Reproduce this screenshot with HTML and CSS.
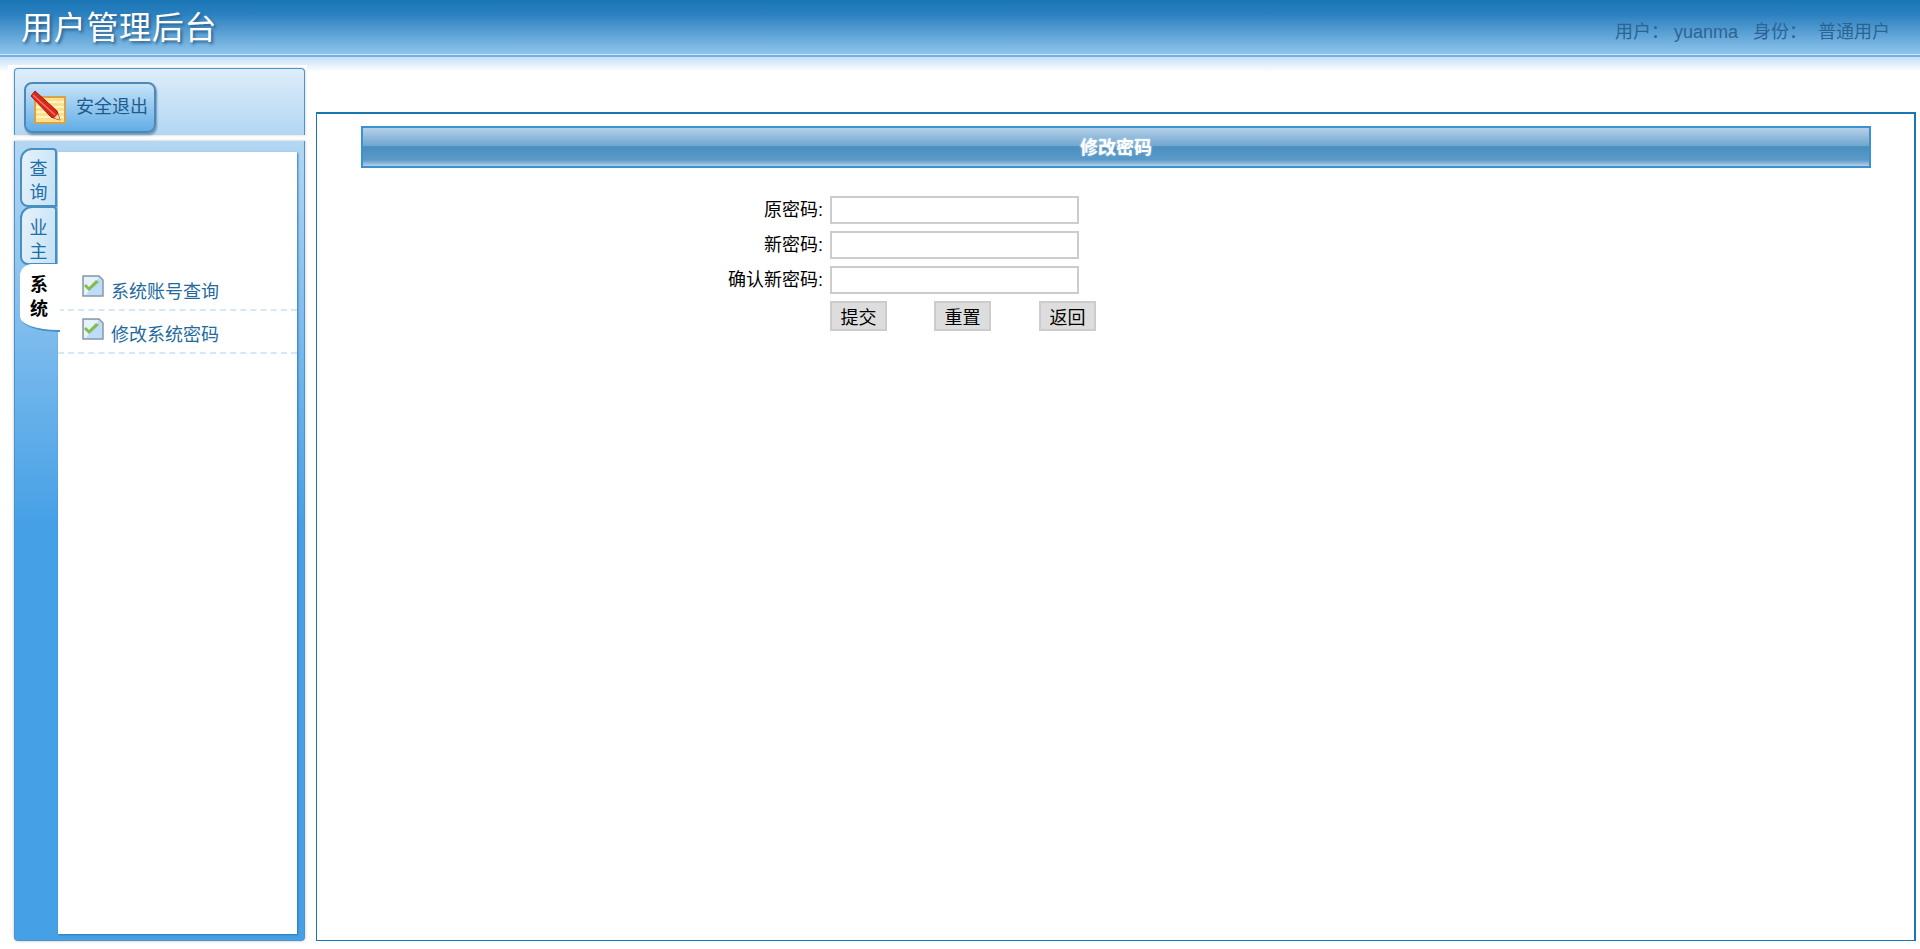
FILE: index.html
```html
<!DOCTYPE html>
<html lang="zh-CN">
<head>
    <meta charset="UTF-8">
    <meta name="viewport" content="width=device-width, initial-scale=1.0">
    <title>用户管理后台</title>
    <link rel="stylesheet" href="styles.css">
</head>
<body>
    <header class="top">
        <h1 class="logo">用户管理后台</h1>
        <div class="user-info">
            <span>用户： yuanma</span>
            <span>身份：</span>
            <span class="user-role">普通用户</span>
        </div>
    </header>

    <div class="page">
        <aside class="side">
            <div class="side-head">
                <a class="logout" href="#">
                    <svg class="logout-icon" width="38" height="36" viewBox="0 0 38 36">
                        <rect x="5" y="7" width="30" height="26" fill="#ffe08a" stroke="#d9a24a" stroke-width="2"/>
                        <path d="M6 12h28M6 17h28M6 22h28M6 27h28" stroke="#fff4c4" stroke-width="2"/>
                        <path d="M1 6 5 1 27 21 30 30 21 27Z" fill="#d8281c" stroke="#a5160f" stroke-width="1"/>
                        <path d="M3 5 25 25" stroke="#f2746a" stroke-width="1.5"/>
                        <path d="M24 28 28 24 30 30Z" fill="#f4d9a8"/>
                    </svg>
                    <span>安全退出</span>
                </a>
            </div>
            <div class="side-body">
                <div class="tabs">
                    <a class="tab" href="#">查<br>询</a>
                    <a class="tab" href="#">业<br>主</a>
                    <a class="tab tab-on" href="#">系<br>统</a>
                </div>
                <ul class="menu">
                    <li class="menu-item">
                        <svg class="doc-icon" width="22" height="22" viewBox="0 0 22 22">
                            <path d="M1 1H17L21 5V21H1Z" fill="#bcdcfa" stroke="#8b98a8" stroke-width="1.5"/>
                            <path d="M2 2H16V4L4 20H2Z" fill="#e6f1fb"/>
                            <path d="M2 11 4 9 7 12 14 5 17 7 7 16Z" fill="#83bc4f"/>
                        </svg>
                        <a href="#">系统账号查询</a>
                    </li>
                    <li class="menu-item">
                        <svg class="doc-icon" width="22" height="22" viewBox="0 0 22 22">
                            <path d="M1 1H17L21 5V21H1Z" fill="#bcdcfa" stroke="#8b98a8" stroke-width="1.5"/>
                            <path d="M2 2H16V4L4 20H2Z" fill="#e6f1fb"/>
                            <path d="M2 11 4 9 7 12 14 5 17 7 7 16Z" fill="#83bc4f"/>
                        </svg>
                        <a href="#">修改系统密码</a>
                    </li>
                </ul>
            </div>
        </aside>

        <main class="main">
            <div class="title-bar">修改密码</div>
            <form class="pwd-form">
                <label for="oldPwd">原密码:</label>
                <input id="oldPwd" type="password">
                <label for="newPwd">新密码:</label>
                <input id="newPwd" type="password">
                <label for="newPwd2">确认新密码:</label>
                <input id="newPwd2" type="password">
                <div class="form-btns">
                    <button type="button">提交</button>
                    <button type="reset">重置</button>
                    <button class="btn-back" type="button">返回</button>
                </div>
            </form>
        </main>
    </div>
</body>
</html>
```

FILE: styles.css
```css
* {
    box-sizing: border-box;
}
html, body {
    height: 100%;
}
body {
    margin: 0;
    display: flex;
    flex-direction: column;
    overflow: hidden;
    background: #fff;
    font-family: "Liberation Sans", "Noto Sans CJK SC", sans-serif;
    font-size: 18px;
}
a {
    text-decoration: none;
}

/* header */
.top {
    height: 57px;
    flex: none;
    display: flex;
    justify-content: space-between;
    padding: 0 30px 0 21px;
    background: linear-gradient(#1a75b5 0, #2a80bf 14px, #8ec4ec 54px, #cfe6f8 54px, #cfe6f8 55px, #74b2de 55px);
}
.logo {
    margin: 0;
    padding-top: 4px;
    font-size: 32px;
    line-height: 48px;
    font-weight: normal;
    letter-spacing: 0.7px;
    color: #fff;
    text-shadow: 2px 2px 3px #2a5f8a;
}
.user-info {
    display: flex;
    gap: 15px;
    padding-top: 20px;
    line-height: 25px;
    color: #2b6494;
}
.user-role {
    margin-left: -4px;
}

/* page */
.page {
    flex: 1;
    min-height: 0;
    display: flex;
    align-items: stretch;
    padding: 8px 4px 8px 8px;
    background: linear-gradient(#c4e0f6, #fff) no-repeat 0 0 / 100% 15px;
}

/* sidebar */
.side {
    width: 299px;
    flex: none;
    display: flex;
    flex-direction: column;
    gap: 6px;
    padding: 3px 2px 0 6px;
    background: #fff;
}
.side-head {
    height: 67px;
    flex: none;
    padding: 13px 0 0 9px;
    background: linear-gradient(#deedfa, #b2d6f2);
    border: 1px solid #4b93c9;
    border-bottom: none;
    border-radius: 4px 4px 0 0;
    box-shadow: 0 0 3px #ccc;
}
.logout {
    width: 132px;
    height: 51px;
    display: flex;
    align-items: center;
    gap: 8px;
    padding: 0 0 6px 5px;
    font-size: 18px;
    color: #1f5c8e;
    background: linear-gradient(#c6e3f8, #62ade6);
    border: 2px solid #5088b5;
    border-radius: 8px;
    box-shadow: 1px 2px 2px #6d97b8;
}
.logout-icon {
    flex: none;
    margin: 6px 0 0 -1px;
}
.side-body {
    flex: 1;
    min-height: 0;
    display: flex;
    padding: 11px 7px 6px 0;
    background: linear-gradient(#b3d7f3, #46a0e6 48%);
    border: 1px solid #4b93c9;
    border-top: none;
    border-radius: 0 0 4px 4px;
    box-shadow: 0 0 3px #bbb;
}

/* vertical tabs */
.tabs {
    width: 43px;
    flex: none;
    margin-top: -4px;
    padding-left: 5px;
}
.tab {
    display: block;
    width: 37px;
    height: 59px;
    padding: 7px 0 0;
    line-height: 24px;
    text-align: center;
    color: #1f6ea8;
    background: linear-gradient(100deg, #e6f2fb, #c4e2f5);
    border: 2px solid #4a8fc2;
    border-radius: 12px 4px 0 8px;
}
.tab + .tab {
    margin-top: -1px;
    padding-top: 8px;
}
.tab + .tab-on {
    position: relative;
    width: 40px;
    height: 68px;
    padding-top: 9px;
    padding-right: 2px;
    font-weight: bold;
    color: #000;
    background: #fff;
    border-width: 0 0 2px;
    border-radius: 12px 0 0 38px / 12px 0 0 15px;
}

/* menu list */
.menu {
    flex: 1;
    margin: 0;
    padding: 116px 0 0;
    list-style: none;
    background: #fff;
    box-shadow: 1px 1px 2px #2f78b0;
}
.menu-item {
    height: 43px;
    display: flex;
    gap: 7px;
    padding: 7px 0 0 24px;
    border-bottom: 2px dashed #d4e9f8;
}
.menu-item a {
    padding-top: 5px;
    line-height: 24px;
    color: #226a9e;
}
.doc-icon {
    flex: none;
}

/* main area */
.main {
    flex: 1;
    margin: 47px 0 0 9px;
    padding: 12px 43px 13px 44px;
    border: solid #1a75b5;
    border-width: 2px 2px 1px 1px;
}
.title-bar {
    height: 42px;
    line-height: 40px;
    text-align: center;
    font-weight: bold;
    color: #fff;
    text-shadow: 0 0 2px #d8e8f5;
    background: linear-gradient(#b5d0e8 0, #6fa6cf 47%, #4a8fc0 49%, #5a9ac8 84%, #b5d0ea 100%);
    border: 2px solid #3a93d0;
}
.pwd-form {
    display: grid;
    grid-template-columns: 462px 249px;
    gap: 7px;
    margin-top: 28px;
    align-items: center;
}
.pwd-form label {
    text-align: right;
    line-height: 28px;
}
.pwd-form input {
    width: 249px;
    height: 28px;
    padding: 0 4px;
    border: 2px solid #ccc;
    background: #fff;
    outline: none;
}
.form-btns {
    grid-column: 2;
    display: flex;
    gap: 47px;
}
.form-btns button {
    width: 57px;
    height: 30px;
    flex: none;
    padding: 0;
    font: inherit;
    color: #000;
    background: #ddd;
    border: 2px solid #ccc;
}
.form-btns .btn-back {
    margin-left: 1px;
}
```
